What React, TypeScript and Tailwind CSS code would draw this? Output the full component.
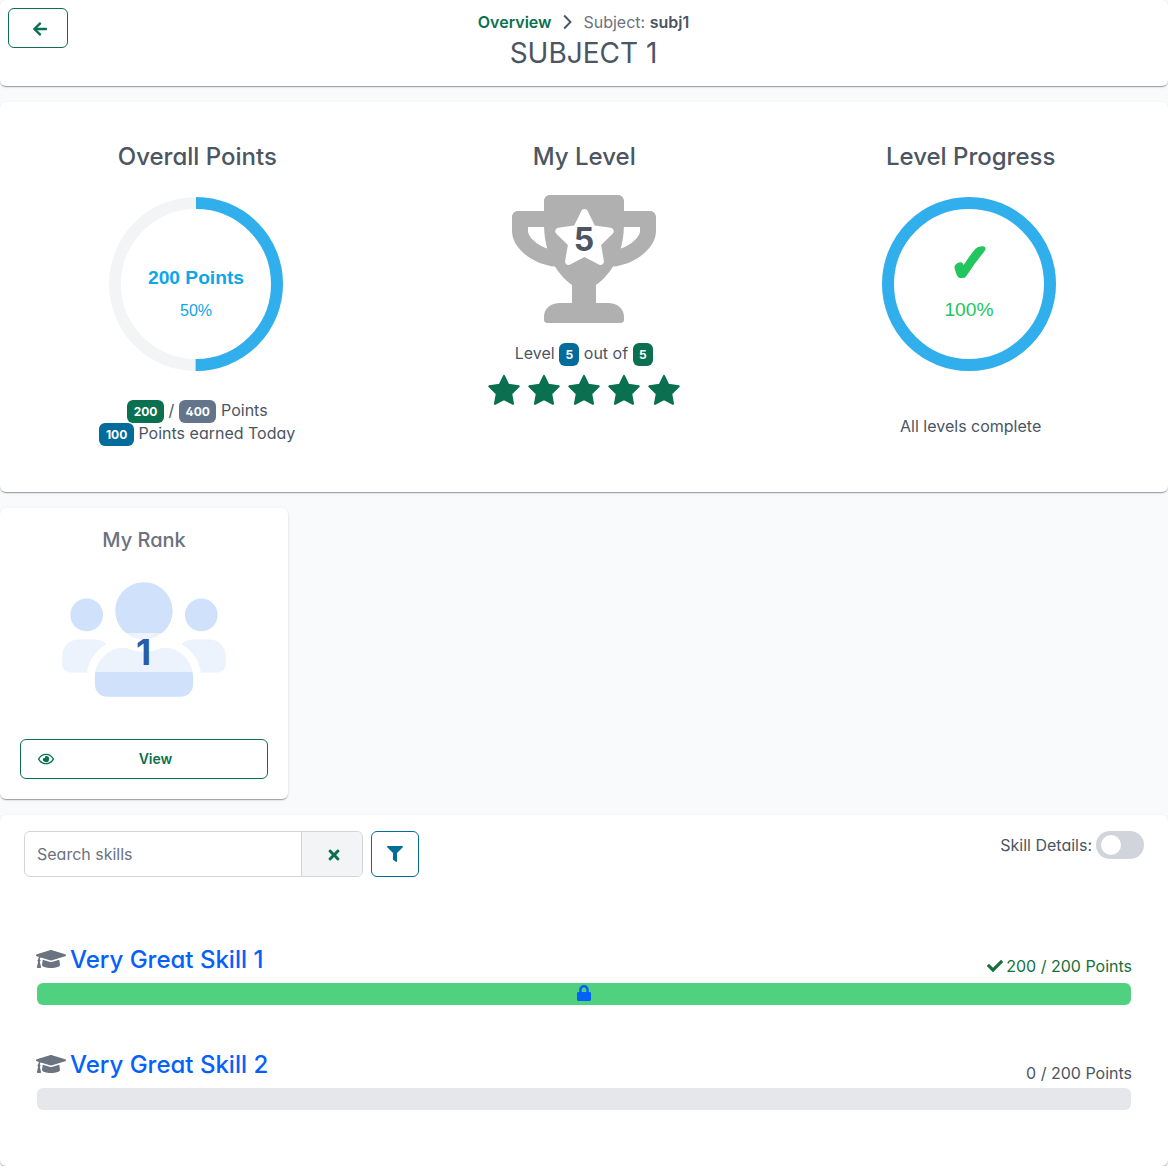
import React from 'react';
import {
  FaArrowLeft,
  FaCheck,
  FaFilter,
  FaGraduationCap,
  FaLock,
  FaRegEye,
  FaStar,
  FaTimes,
  FaTrophy,
  FaUsers,
} from 'react-icons/fa';

const cardShadow =
  'rounded-md bg-white shadow-[0_2px_1px_-1px_rgba(0,0,0,0.2),0_1px_1px_0_rgba(0,0,0,0.14),0_1px_3px_0_rgba(0,0,0,0.12)]';

function Badge({ tone, children }: { tone: string; children: React.ReactNode }) {
  return (
    <span className={`mt-px -mb-px inline-flex h-[23px] items-center justify-center rounded-md px-[6.6px] text-xs font-bold text-white ${tone}`}>
      {children}
    </span>
  );
}

function RatingStar() {
  return (
    <svg
      width="32"
      height="32"
      viewBox="0 0 14 14"
      fill="currentColor"
      stroke="currentColor"
      strokeWidth="0.9"
      strokeLinejoin="round"
    >
      <path d="M7 .85 8.9 4.75 13.45 5.4 10.15 8.6 10.95 13.05 7 10.95 3.05 13.05 3.85 8.6.55 5.4 5.1 4.75Z" />
    </svg>
  );
}

function Ring({ percent, children }: { percent: number; children: React.ReactNode }) {
  const length = 2 * Math.PI * 81;
  return (
    <svg width="174" height="174" viewBox="0 0 174 174" className="relative -left-[1.3px]">
      <circle cx="87" cy="87" r="81" fill="none" stroke="#f3f4f6" strokeWidth="12" />
      <circle
        cx="87"
        cy="87"
        r="81"
        fill="none"
        stroke="#30afec"
        strokeWidth="12"
        strokeDasharray={`${(length * percent) / 100} ${length}`}
        transform="rotate(-90 87 87)"
      />
      {children}
    </svg>
  );
}

function Header() {
  return (
    <header className={`flex h-[86px] ${cardShadow}`}>
      <div className="w-[200px] p-2">
        <button className="flex h-10 w-[60px] items-center justify-center rounded-md border border-[#0a7050] pt-px pl-1 text-[#0a7050]">
          <FaArrowLeft size={16} />
        </button>
      </div>
      <div className="flex flex-1 flex-col items-center pt-2.5">
        <nav className="flex items-center pr-px leading-6">
          <a className="font-semibold text-[#0a7050]">Overview</a>
          <svg width="16" height="16" viewBox="0 0 16 16" className="mx-2" fill="none" stroke="#4b5563" strokeWidth="1.9">
            <path d="M5.2 1.5 11.5 8 5.2 14.5" />
          </svg>
          <span className="text-[#6b7280]">
            Subject: <span className="font-semibold text-[#4b5563]">subj1</span>
          </span>
        </nav>
        <h1 className="mt-px pr-px text-[28px] leading-9">SUBJECT 1</h1>
      </div>
      <div className="w-[200px]" />
    </header>
  );
}

function Summary() {
  return (
    <section className={`mt-4 grid h-[390px] grid-cols-3 px-1 text-center ${cardShadow}`}>
      <div className="flex flex-col items-center pt-[37px]">
        <h2 className="text-2xl leading-9 font-medium">Overall Points</h2>
        <div className="mt-[22px]">
          <Ring percent={50}>
            <text x="87" y="87" textAnchor="middle" fontFamily="Liberation Sans, Arial, sans-serif" fontSize="19.2" fontWeight="700" fill="#0ea5e9">
              200 Points
            </text>
            <text x="87" y="119" textAnchor="middle" fontFamily="Liberation Sans, Arial, sans-serif" fontSize="16" fill="#0ea5e9">
              50%
            </text>
          </Ring>
        </div>
        <div className="mt-7 flex items-center gap-[4.6px] leading-[23px]">
          <Badge tone="bg-[#0a7050]">200</Badge>/<Badge tone="bg-[#64748b]">400</Badge>
          <span>Points</span>
        </div>
        <div className="flex items-center gap-[4.6px] leading-[23px]">
          <Badge tone="bg-[#046c9a]">100</Badge>
          <span>Points earned Today</span>
        </div>
      </div>
      <div className="flex flex-col items-center pt-[37px]">
        <h2 className="pl-[0.5px] text-2xl leading-9 font-medium">My Level</h2>
        <div className="relative mt-5 h-32 w-36">
          <FaTrophy className="h-32 w-36 text-[#b0b0b0]" />
          <FaStar className="absolute top-[14px] left-[41px] h-[56px] w-[63px] text-white" />
          <span className="absolute inset-x-0 top-[27px] text-[32px] leading-9 font-bold">5</span>
        </div>
        <div className="mt-[19px] flex items-center gap-[4.6px] pr-[0.6px] leading-[23px]">
          <span>Level</span>
          <Badge tone="w-5 bg-[#046c9a]">5</Badge>
          <span>out of</span>
          <Badge tone="w-5 bg-[#0a7050]">5</Badge>
        </div>
        <div className="mt-[9px] flex gap-2 text-[#0a7050]">
          {[1, 2, 3, 4, 5].map((star) => (
            <RatingStar key={star} />
          ))}
        </div>
      </div>
      <div className="flex flex-col items-center pt-[37px]">
        <h2 className="text-2xl leading-9 font-medium">Level Progress</h2>
        <div className="mt-[22px]">
          <Ring percent={100}>
            <text
              x="88.5"
              y="84"
              textAnchor="middle"
              fontFamily="Liberation Sans, DejaVu Sans, sans-serif"
              fontSize="52"
              fontWeight="700"
              fill="#22c55e"
              stroke="#22c55e"
              strokeWidth="4.2"
              strokeLinejoin="round"
            >
              ✓
            </text>
            <text x="87" y="119" textAnchor="middle" fontFamily="Liberation Sans, Arial, sans-serif" fontSize="19.2" fill="#22c55e">
              100%
            </text>
          </Ring>
        </div>
        <p className="mt-[43px]">All levels complete</p>
      </div>
    </section>
  );
}

function Rank() {
  return (
    <section className={`mt-4 flex h-[291px] w-72 flex-col items-center px-5 pt-[17px] ${cardShadow}`}>
      <h3 className="text-xl leading-[30px] font-medium text-[#6b7280]">My Rank</h3>
      <div className="relative mt-[19px] h-[131px] w-[164px]">
        <FaUsers className="h-[131px] w-[164px] text-[#d0e1fb]" />
        <div className="absolute inset-x-0 top-[59px] h-[39px] bg-white/60" />
        <span className="absolute inset-x-0 top-[59px] pr-px text-center text-[35px] leading-[39px] font-bold text-[#2a5caa]">1</span>
      </div>
      <button className="mt-[34px] flex h-10 w-full items-center rounded-md border border-[#0a7050] pr-[10px] pl-[17px] text-sm font-semibold text-[#0a7050]">
        <FaRegEye size={16} />
        <span className="flex-1">View</span>
      </button>
    </section>
  );
}

function Skill({ name, points, done }: { name: string; points: string; done?: boolean }) {
  return (
    <div className="mx-9 h-[105px]">
      <div className="flex h-10 justify-between">
        <div className="flex h-8 items-center text-2xl font-medium text-[#0561fa]">
          <FaGraduationCap className="mr-1 h-6 w-[30px] text-[#6b7280]" />
          <span className="pt-0.5">{name}</span>
        </div>
        <div className={done ? 'mb-[5px] flex h-6 items-center gap-1 self-end text-[#15703a]' : 'mb-[3px] flex h-6 items-center self-end'}>
          {done && <FaCheck size={16} className="relative left-px" />}
          {points}
        </div>
      </div>
      <div className={`mx-px flex h-[22px] items-center justify-center rounded-md ${done ? 'bg-[#4fd17f]' : 'bg-[#e5e7eb]'}`}>
        {done && <FaLock size={16} className="mb-0.5 text-[#0561fa]" />}
      </div>
    </div>
  );
}

function Skills() {
  return (
    <section className={`mt-4 h-[351px] ${cardShadow}`}>
      <div className="flex items-start px-6 pt-4">
        <div className="flex h-[46px] w-[339px] overflow-hidden rounded-md border border-[#d1d5db]">
          <input className="min-w-0 flex-1 pl-3 outline-none placeholder:text-[#6b7280]" placeholder="Search skills" />
          <button className="flex w-[61px] items-center justify-center border-l border-[#d1d5db] bg-[#f3f4f6] pt-0.5 pl-1 text-[#0a7050]">
            <FaTimes size={16} />
          </button>
        </div>
        <button className="ml-2 flex h-[46px] w-12 items-center justify-center rounded-md border border-[#046c9a] text-[#046c9a]">
          <FaFilter size={16} />
        </button>
        <label className="ml-auto flex items-center gap-1">
          Skill Details:
          <span className="flex h-7 w-12 items-center rounded-full bg-[#d1d5db] pl-[5px]">
            <span className="size-5 rounded-full bg-white" />
          </span>
        </label>
      </div>
      <div className="mt-[66px]">
        <Skill name="Very Great Skill 1" points="200 / 200 Points" done />
        <Skill name="Very Great Skill 2" points="0 / 200 Points" />
      </div>
    </section>
  );
}

export default function App() {
  return (
    <main className="h-[1166px] overflow-hidden bg-[#f8fafc] font-['Inter',sans-serif] text-base text-[#4b5563] [font-feature-settings:'cv02','cv03','cv04','cv11']">
      <Header />
      <Summary />
      <Rank />
      <Skills />
    </main>
  );
}
